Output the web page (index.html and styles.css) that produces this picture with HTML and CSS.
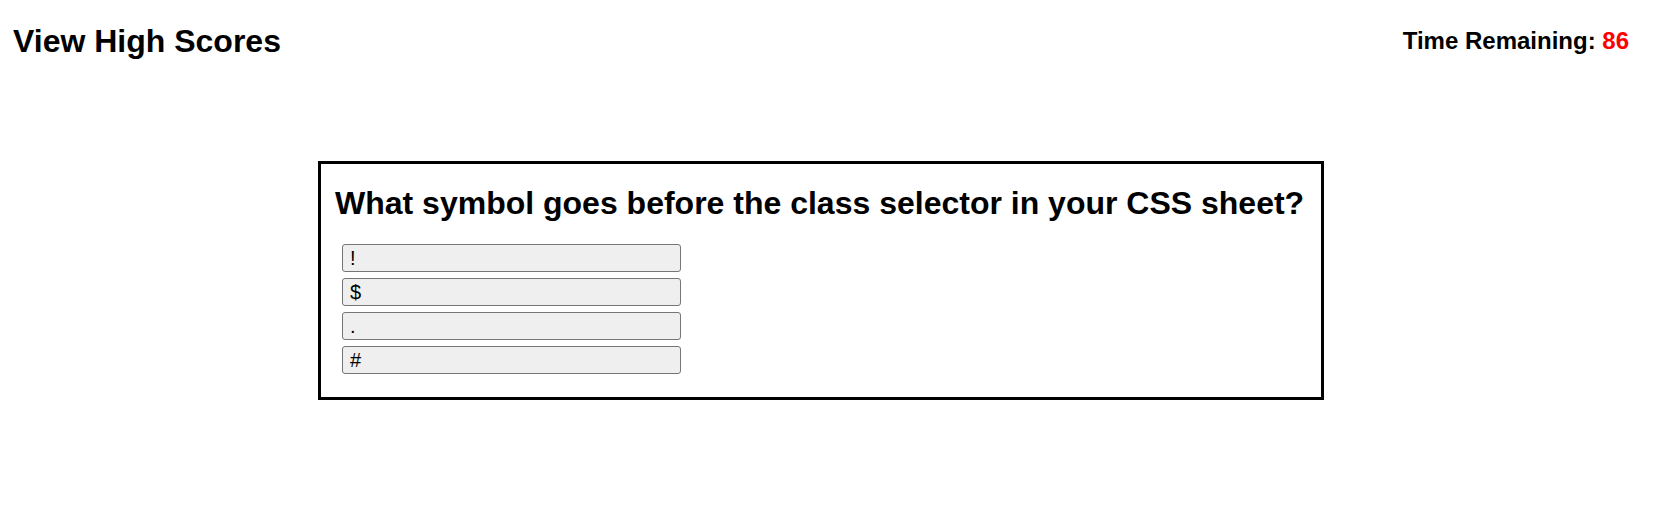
FILE: index.html
```html
<!DOCTYPE html>
<html lang="en">
<head>
<meta charset="utf-8">
<title>Code Quiz</title>
<link rel="stylesheet" href="styles.css">
</head>
<body>
<header class="topbar">
  <a class="scores-link" href="#">View High Scores</a>
  <p class="timer">Time Remaining: <span class="time-left">86</span></p>
</header>
<main class="quiz-card">
  <h1 class="question">What symbol goes before the class selector in your CSS sheet?</h1>
  <div class="choices">
    <button class="choice">!</button>
    <button class="choice">$</button>
    <button class="choice">.</button>
    <button class="choice">#</button>
  </div>
</main>
</body>
</html>
```
FILE: styles.css
```css
html, body {
  margin: 0;
  padding: 0;
  background: #ffffff;
}

body {
  font-family: "Liberation Sans", Arial, sans-serif;
  color: #000000;
}

.topbar {
  display: flex;
  justify-content: space-between;
  align-items: flex-start;
  height: 161px;
  padding: 0 26px 0 13px;
  box-sizing: border-box;
}

.scores-link {
  display: block;
  margin-top: 23px;
  font-size: 32px;
  line-height: 36px;
  font-weight: bold;
  color: #000000;
  text-decoration: none;
}

.timer {
  margin: 27px 0 0 0;
  font-size: 24px;
  line-height: 28px;
  font-weight: bold;
}

.time-left {
  color: #ff0000;
}

.quiz-card {
  margin-left: 318px;
  width: 1000px;
  border: 3px solid #000000;
  padding: 0 0 23px 0;
}

.question {
  margin: 21px 0 23px 14px;
  font-size: 32px;
  line-height: 36px;
  font-weight: bold;
}

.choices {
  display: flex;
  flex-direction: column;
  align-items: flex-start;
  gap: 6px;
  padding-left: 21px;
}

.choice {
  box-sizing: border-box;
  width: 339px;
  height: 28px;
  padding: 1px 7px;
  font-family: "Liberation Sans", Arial, sans-serif;
  font-size: 20px;
  line-height: 24px;
  text-align: left;
  color: #000000;
  background: #efefef;
  border: 1px solid #767676;
  border-radius: 3px;
}
```
